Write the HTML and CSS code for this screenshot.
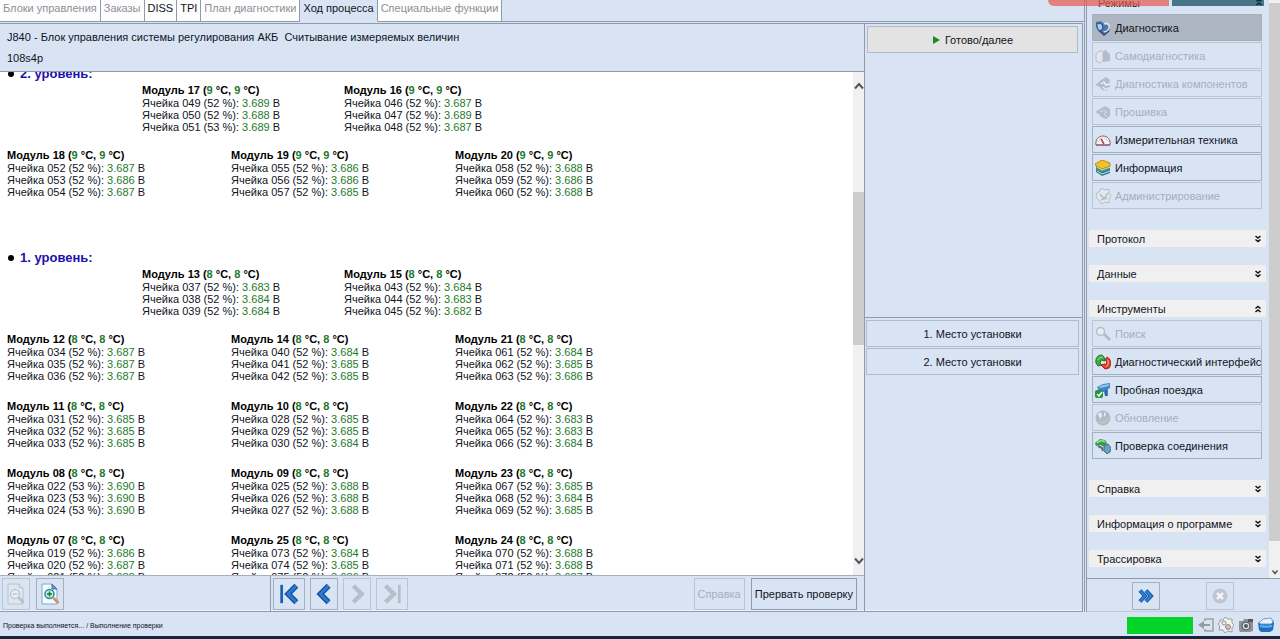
FILE: index.html
```html
<!DOCTYPE html>
<html lang="ru">
<head>
<meta charset="utf-8">
<title>Ход процесса</title>
<link rel="stylesheet" href="styles.css">
</head>
<body>
<div class="app">
  <div class="work">
    <nav class="tabs">
      <button class="tab" disabled>Блоки управления</button>
      <button class="tab" disabled>Заказы</button>
      <button class="tab">DISS</button>
      <button class="tab">TPI</button>
      <button class="tab" disabled>План диагностики</button>
      <button class="tab active">Ход процесса</button>
      <button class="tab" disabled>Специальные функции</button>
    </nav>
    <div class="panes">
      <main class="main">
        <header class="title">
          <p>J840 - Блок управления системы регулирования АКБ&nbsp; Считывание измеряемых величин</p>
          <p>108s4p</p>
        </header>
        <div class="viewport">
          <div class="report">
            <h2 class="level">2. уровень:</h2>
            <div class="pair">
              <section class="module"><h3>Модуль 17 (<b>9</b> °C, <b>9</b> °C)</h3><p>Ячейка 049 (52 %): <b>3.689</b> В</p><p>Ячейка 050 (52 %): <b>3.688</b> В</p><p>Ячейка 051 (53 %): <b>3.689</b> В</p></section>
              <section class="module"><h3>Модуль 16 (<b>9</b> °C, <b>9</b> °C)</h3><p>Ячейка 046 (52 %): <b>3.687</b> В</p><p>Ячейка 047 (52 %): <b>3.689</b> В</p><p>Ячейка 048 (52 %): <b>3.687</b> В</p></section>
            </div>
            <div class="trio">
              <section class="module"><h3>Модуль 18 (<b>9</b> °C, <b>9</b> °C)</h3><p>Ячейка 052 (52 %): <b>3.687</b> В</p><p>Ячейка 053 (52 %): <b>3.686</b> В</p><p>Ячейка 054 (52 %): <b>3.687</b> В</p></section>
              <section class="module"><h3>Модуль 19 (<b>9</b> °C, <b>9</b> °C)</h3><p>Ячейка 055 (52 %): <b>3.686</b> В</p><p>Ячейка 056 (52 %): <b>3.686</b> В</p><p>Ячейка 057 (52 %): <b>3.685</b> В</p></section>
              <section class="module"><h3>Модуль 20 (<b>9</b> °C, <b>9</b> °C)</h3><p>Ячейка 058 (52 %): <b>3.688</b> В</p><p>Ячейка 059 (52 %): <b>3.686</b> В</p><p>Ячейка 060 (52 %): <b>3.688</b> В</p></section>
            </div>
            <h2 class="level next">1. уровень:</h2>
            <div class="pair">
              <section class="module"><h3>Модуль 13 (<b>8</b> °C, <b>8</b> °C)</h3><p>Ячейка 037 (52 %): <b>3.683</b> В</p><p>Ячейка 038 (52 %): <b>3.684</b> В</p><p>Ячейка 039 (52 %): <b>3.684</b> В</p></section>
              <section class="module"><h3>Модуль 15 (<b>8</b> °C, <b>8</b> °C)</h3><p>Ячейка 043 (52 %): <b>3.684</b> В</p><p>Ячейка 044 (52 %): <b>3.683</b> В</p><p>Ячейка 045 (52 %): <b>3.682</b> В</p></section>
            </div>
            <div class="trio">
              <section class="module"><h3>Модуль 12 (<b>8</b> °C, <b>8</b> °C)</h3><p>Ячейка 034 (52 %): <b>3.687</b> В</p><p>Ячейка 035 (52 %): <b>3.687</b> В</p><p>Ячейка 036 (52 %): <b>3.687</b> В</p></section>
              <section class="module"><h3>Модуль 14 (<b>8</b> °C, <b>8</b> °C)</h3><p>Ячейка 040 (52 %): <b>3.684</b> В</p><p>Ячейка 041 (52 %): <b>3.685</b> В</p><p>Ячейка 042 (52 %): <b>3.685</b> В</p></section>
              <section class="module"><h3>Модуль 21 (<b>8</b> °C, <b>8</b> °C)</h3><p>Ячейка 061 (52 %): <b>3.684</b> В</p><p>Ячейка 062 (52 %): <b>3.685</b> В</p><p>Ячейка 063 (52 %): <b>3.686</b> В</p></section>
              <section class="module"><h3>Модуль 11 (<b>8</b> °C, <b>8</b> °C)</h3><p>Ячейка 031 (52 %): <b>3.685</b> В</p><p>Ячейка 032 (52 %): <b>3.685</b> В</p><p>Ячейка 033 (52 %): <b>3.685</b> В</p></section>
              <section class="module"><h3>Модуль 10 (<b>8</b> °C, <b>8</b> °C)</h3><p>Ячейка 028 (52 %): <b>3.685</b> В</p><p>Ячейка 029 (52 %): <b>3.685</b> В</p><p>Ячейка 030 (52 %): <b>3.684</b> В</p></section>
              <section class="module"><h3>Модуль 22 (<b>8</b> °C, <b>8</b> °C)</h3><p>Ячейка 064 (52 %): <b>3.683</b> В</p><p>Ячейка 065 (52 %): <b>3.683</b> В</p><p>Ячейка 066 (52 %): <b>3.684</b> В</p></section>
              <section class="module"><h3>Модуль 08 (<b>8</b> °C, <b>8</b> °C)</h3><p>Ячейка 022 (53 %): <b>3.690</b> В</p><p>Ячейка 023 (53 %): <b>3.690</b> В</p><p>Ячейка 024 (53 %): <b>3.690</b> В</p></section>
              <section class="module"><h3>Модуль 09 (<b>8</b> °C, <b>8</b> °C)</h3><p>Ячейка 025 (52 %): <b>3.688</b> В</p><p>Ячейка 026 (52 %): <b>3.688</b> В</p><p>Ячейка 027 (52 %): <b>3.688</b> В</p></section>
              <section class="module"><h3>Модуль 23 (<b>8</b> °C, <b>8</b> °C)</h3><p>Ячейка 067 (52 %): <b>3.685</b> В</p><p>Ячейка 068 (52 %): <b>3.684</b> В</p><p>Ячейка 069 (52 %): <b>3.685</b> В</p></section>
              <section class="module"><h3>Модуль 07 (<b>8</b> °C, <b>8</b> °C)</h3><p>Ячейка 019 (52 %): <b>3.686</b> В</p><p>Ячейка 020 (52 %): <b>3.687</b> В</p><p>Ячейка 021 (52 %): <b>3.688</b> В</p></section>
              <section class="module"><h3>Модуль 25 (<b>8</b> °C, <b>8</b> °C)</h3><p>Ячейка 073 (52 %): <b>3.684</b> В</p><p>Ячейка 074 (52 %): <b>3.685</b> В</p><p>Ячейка 075 (52 %): <b>3.686</b> В</p></section>
              <section class="module"><h3>Модуль 24 (<b>8</b> °C, <b>8</b> °C)</h3><p>Ячейка 070 (52 %): <b>3.688</b> В</p><p>Ячейка 071 (52 %): <b>3.688</b> В</p><p>Ячейка 072 (52 %): <b>3.687</b> В</p></section>
            </div>
          </div>
          <div class="scrollbar">
            <svg class="arrow" viewBox="0 0 10 8"><path d="M1 6.500 5 2 9 6.500" fill="none" stroke="#555" stroke-width="2"/></svg>
            <div class="track"><div class="thumb"></div></div>
            <svg class="arrow" viewBox="0 0 10 8"><path d="M1 1.500 5 6 9 1.500" fill="none" stroke="#555" stroke-width="2"/></svg>
          </div>
        </div>
        <footer class="toolbar">
          <div class="group zoom-tools">
            <button class="tool" disabled aria-label="Уменьшить">
              <svg viewBox="0 0 20 22"><path d="M2 1h11l4 4v16H2z" fill="#dfe6ef" stroke="#b9c2cd"/><path d="M13 1v4h4" fill="none" stroke="#b9c2cd"/><circle cx="9" cy="11" r="4.500" fill="#e8edf4" stroke="#aeb7c2"/><path d="M6.500 11h5" stroke="#aeb7c2"/><path d="m12.500 14.500 5 5" stroke="#b4bdc8" stroke-width="2.500"/></svg>
            </button>
            <button class="tool" aria-label="Увеличить">
              <svg viewBox="0 0 20 22"><path d="M2 1h10l5 5v15H2z" fill="#f5faff" stroke="#86a3c6"/><path d="M12 1v5h5z" fill="#6d9bd0" stroke="#3c6ca8"/><circle cx="9.500" cy="11" r="4.500" fill="#c5eddb" stroke="#2e8a9a" stroke-width="1.500"/><path d="M7 11h5M9.500 8.500v5" stroke="#147a2c" stroke-width="1.500"/><path d="m13.500 15 5 5" stroke="#c79a68" stroke-width="3"/></svg>
            </button>
          </div>
          <div class="group pager">
            <button class="tool wide" aria-label="В начало"><svg viewBox="0 0 24 24"><path d="M4 2v20" stroke="#1d5fb4" stroke-width="3"/><path d="M20 3 11 12l9 9" fill="none" stroke="#1450a0" stroke-width="6"/><path d="M20 3 11 12l9 9" fill="none" stroke="#2c7bd2" stroke-width="3"/></svg></button>
            <button class="tool" aria-label="Назад"><svg viewBox="0 0 24 24"><path d="M17 3 8 12l9 9" fill="none" stroke="#1450a0" stroke-width="6"/><path d="M17 3 8 12l9 9" fill="none" stroke="#2c7bd2" stroke-width="3"/></svg></button>
            <button class="tool" disabled aria-label="Вперёд"><svg viewBox="0 0 24 24"><path d="m8 3 9 9-9 9" fill="none" stroke="#b6bec9" stroke-width="5"/></svg></button>
            <button class="tool wide" disabled aria-label="В конец"><svg viewBox="0 0 24 24"><path d="m5 3 9 9-9 9" fill="none" stroke="#b6bec9" stroke-width="5"/><path d="M20 2v20" stroke="#b6bec9" stroke-width="3"/></svg></button>
          </div>
          <div class="group actions">
            <button class="action" disabled>Справка</button>
            <button class="action stop">Прервать проверку</button>
          </div>
        </footer>
      </main>
      <aside class="tasks">
        <div class="task-top">
          <button class="task ready"><svg viewBox="0 0 8 8"><path d="M1 0v8l7-4z" fill="#1c8a1c"/></svg>Готово/далее</button>
        </div>
        <div class="task-list">
          <button class="task">1. Место установки</button>
          <button class="task">2. Место установки</button>
        </div>
      </aside>
    </div>
  </div>

  <aside class="side">
    <div class="side-scroll">
      <div class="side-content">
        <div class="modes"><span>Режимы</span><div class="teal"><svg viewBox="0 0 8 8"><path d="m1.500 3.500 2.500-2 2.500 2M1.500 7 4 5l2.500 2" fill="none" stroke="#123" stroke-width="1.500"/></svg></div></div>
        <div class="list">
          <button class="item selected"><svg viewBox="0 0 16 16"><path d="M1 2 6 1l5 4 4 1v4l-6 5-5-3-3-5z" fill="#4c78ac"/><path d="m2 3 5 1 1 5-4 2-2-4z" fill="#a9cbe8" stroke="#274f80"/><path d="M9 4c4-2 6 1 5 4s-4 5-5 3" fill="none" stroke="#d7e5f2" stroke-width="1.500"/><path d="m5 11 4 4 5-4" fill="none" stroke="#234b78" stroke-width="1.500"/></svg>Диагностика</button>
          <button class="item" disabled><svg viewBox="0 0 16 16"><path d="M5 3 1 6v7l4 2 3-3V3z" fill="#e4e8ee" stroke="#b7bfca"/><path d="M8 5c2-4 4-4 4-1l3 2v7l-7 1z" fill="#b4bcc8"/></svg>Самодиагностика</button>
          <button class="item" disabled><svg viewBox="0 0 16 16"><path d="m0 9 5-4 6-4 4 3-1 4 1 3-4 1 1 3-5-1-2-3z" fill="#b4bcc8"/><path d="m6 8 3-2 2 3 3-1M8 11l3 3" stroke="#edf1f6" stroke-width="1.500" fill="none"/></svg>Диагностика компонентов</button>
          <button class="item" disabled><svg viewBox="0 0 16 16"><path d="m0 8 5-3 5-3 5 3v7l-4 3-5-2-2-3z" fill="#b4bcc8"/><path d="m5 8 4-2 3 2-3 2 3 3" stroke="#d9e0e8" fill="none"/></svg>Прошивка</button>
          <button class="item"><svg viewBox="0 0 16 16"><path d="M1 13c-1-6 3-9 7-9s8 3 7 9z" fill="#fbf4f0" stroke="#77606a"/><path d="M3 10c1-3 3-4 5-4s4 1 5 4" fill="none" stroke="#cba7a7" stroke-dasharray="1 1"/><path d="M9 12 6 7" stroke="#a04850" stroke-width="1.500"/><path d="M1 13h14" stroke="#8a5058"/></svg>Измерительная техника</button>
          <button class="item"><svg viewBox="0 0 16 16"><path d="m1 9 9-3 5 3v4l-8 3-6-4z" fill="#327a9c"/><path d="m1 6 8-3 6 3v3l-9 3-5-3z" fill="#4b9b74"/><path d="m0 4 7-4 8 3v3l-8 3-6-3z" fill="#efc327" stroke="#b98d15"/><path d="m2 7 5 3 8-3M2 11l5 3 8-3" fill="none" stroke="#c3dccb"/></svg>Информация</button>
          <button class="item" disabled><svg viewBox="0 0 16 16"><path d="M2 5 5 3l1-3 4 2 4-1v4l2 3-2 3v4l-4-1-4 2-2-4-3-3z" fill="#e4e9f0" stroke="#b4bcc8"/><path d="m5 6 4 5 4-6M6 12l6-2" stroke="#b4bcc8" stroke-width="1.500" fill="none"/></svg>Администрирование</button>
        </div>
        <button class="section">Протокол<svg viewBox="0 0 8 8"><path d="m1.500 1 2.500 2 2.500-2M1.500 4.500 4 6.500l2.500-2" fill="none" stroke="#111" stroke-width="1.500"/></svg></button>
        <button class="section">Данные<svg viewBox="0 0 8 8"><path d="m1.500 1 2.500 2 2.500-2M1.500 4.500 4 6.500l2.500-2" fill="none" stroke="#111" stroke-width="1.500"/></svg></button>
        <button class="section open">Инструменты<svg viewBox="0 0 8 8"><path d="M1.500 3.500 4 1.500l2.500 2M1.500 7 4 5l2.500 2" fill="none" stroke="#111" stroke-width="1.500"/></svg></button>
        <div class="list">
          <button class="item" disabled><svg viewBox="0 0 16 16"><circle cx="5.500" cy="5.500" r="4" fill="#e8edf3" stroke="#b4bcc8" stroke-width="1.500"/><path d="m9 8 6 6" stroke="#b4bcc8" stroke-width="3"/></svg>Поиск</button>
          <button class="item"><svg viewBox="0 0 16 16"><path d="M1 9c-1-5 2-8 6-8l2 2 1 4-4-1-1 3 2 2-4 1z" fill="#3faa3c" stroke="#1c7a24"/><path d="M3 6c1-2 3-3 5-3" stroke="#b3eb9c" fill="none"/><path d="M12 3c4 2 5 7 2 11l-4 1-4-4 4-1 1 1 1-4-2-1z" fill="#e0452c" stroke="#a82317"/><path d="M13 6c1 3 0 5-2 7" stroke="#ffb59b" fill="none"/></svg>Диагностический интерфейс</button>
          <button class="item"><svg viewBox="0 0 16 16"><path d="m2 5 6-3 7-1v5l-2 1v7h-3l-1-4-5-1z" fill="#3f83c4"/><path d="m3 5 5-2 6-1v2L6 6z" fill="#8dc2ea"/><path d="M11 8v6" stroke="#1d4d88"/><rect x="0" y="8" width="8" height="8" rx="2" fill="#219637"/><path d="m2 12 2 2 3-4" fill="none" stroke="#fff" stroke-width="1.500"/></svg>Пробная поездка</button>
          <button class="item" disabled><svg viewBox="0 0 16 16"><circle cx="8" cy="8" r="7.500" fill="#b4bac3"/><path d="m3 4 3-2 1 4-2 3zm6-2 2 2-2 3" fill="#e9edf2"/><path d="M4 12c4 2 7 0 9-3" stroke="#c9cfd7" fill="none"/></svg>Обновление</button>
          <button class="item"><svg viewBox="0 0 16 16"><path d="m0 5 5-4 5 1 2 3-2 4-5-2-4 1z" fill="#36a048"/><path d="M2 5c3-3 5-3 8-1" stroke="#a5e09c" fill="none" stroke-width="1.500"/><path d="m3 8 4 2 1 3" stroke="#506f8c" stroke-width="2" fill="none"/><path d="m9 8 4-2 3 4-1 4-3 2-3-3z" fill="#6c9fc1" stroke="#3f6f94"/></svg>Проверка соединения</button>
        </div>
        <button class="section">Справка<svg viewBox="0 0 8 8"><path d="m1.500 1 2.500 2 2.500-2M1.500 4.500 4 6.500l2.500-2" fill="none" stroke="#111" stroke-width="1.500"/></svg></button>
        <button class="section">Информация о программе<svg viewBox="0 0 8 8"><path d="m1.500 1 2.500 2 2.500-2M1.500 4.500 4 6.500l2.500-2" fill="none" stroke="#111" stroke-width="1.500"/></svg></button>
        <button class="section">Трассировка<svg viewBox="0 0 8 8"><path d="m1.500 1 2.500 2 2.500-2M1.500 4.500 4 6.500l2.500-2" fill="none" stroke="#111" stroke-width="1.500"/></svg></button>
      </div>
      <div class="side-bar"><div class="side-thumb"></div><svg viewBox="0 0 8 6"><path d="m1.500 1.500 2.500 3 2.500-3" fill="none" stroke="#555" stroke-width="1.500"/></svg></div>
    </div>
    <div class="side-foot">
      <button class="mini" aria-label="Далее"><svg viewBox="0 0 16 14"><path d="m2 1.500 5 5.500-5 5.500M8 1.500 13 7l-5 5.500" fill="none" stroke="#1450a0" stroke-width="4"/><path d="m2 1.500 5 5.500-5 5.500M8 1.500 13 7l-5 5.500" fill="none" stroke="#2f83d8" stroke-width="2"/></svg></button>
      <button class="mini" disabled aria-label="Отмена"><svg viewBox="0 0 16 16"><circle cx="8" cy="8" r="7.500" fill="#bfc5cd"/><path d="m5 5 6 6M11 5l-6 6" stroke="#f1f4f8" stroke-width="2.500"/></svg></button>
    </div>
  </aside>

  <footer class="status">
    <span>Проверка выполняется... / Выполнение проверки</span>
    <div class="tray">
      <div class="progress"></div>
      <svg viewBox="0 0 16 16"><path d="M7 4V2h8v12H7v-2" fill="#dde3ea" stroke="#98a0aa" stroke-width="1.500"/><path d="M12 7H6V4L0 8l6 4V9h6z" fill="#949ca6"/></svg>
      <svg viewBox="0 0 16 16"><path d="m2 3 3 0 2-3 3 2 4 0v4l2 2-2 3 0 4-4-1-3 2-2-3-4 0 1-4-2-2 2-2z" fill="#f2f2f0" stroke="#9b9ea2"/><circle cx="6" cy="6" r="2" fill="none" stroke="#8b8f94"/><circle cx="10" cy="10" r="2.500" fill="#dbb" stroke="#858a90"/></svg>
      <svg viewBox="0 0 16 16"><path d="M1 4h4l1-2h5l1 2h3v10l-3 1H2L1 13z" fill="#8d9197"/><path d="M10 2h5v3h-5z" fill="#54585e"/><circle cx="8" cy="9" r="4" fill="#d9dde0" stroke="#4d5157"/><circle cx="8" cy="9" r="2" fill="#555b63"/></svg>
      <svg viewBox="0 0 16 16"><path d="m0 6 4-3h11l1 3-1 7-3 2H3l-2-2z" fill="#1e6fc4"/><path d="m1 6 4-4 8-1 2 4-2 2H3z" fill="#eaf3fb" stroke="#6d9fd0"/><path d="M2 9c5 1 8 1 12 0" stroke="#66b0ee" stroke-width="2" fill="none"/></svg>
    </div>
  </footer>
  <div class="pill"></div>
</div>
</body>
</html>
```

FILE: styles.css
```css
* { box-sizing: border-box; }

body {
  margin: 0;
  background: #d8e4f3;
  color: #10131c;
  font-family: "Liberation Sans", Arial, sans-serif;
  font-size: 11px;
}

h2, h3, p { margin: 0; }

button {
  margin: 0;
  padding: 0;
  border: 1px solid #a5afbd;
  background: #d8e4f3;
  color: inherit;
  font: inherit;
  white-space: nowrap;
}

button:disabled { color: #a3afbe; border-color: #bcc4d0; }

svg { display: block; flex: none; }

.app {
  position: relative;
  display: grid;
  grid-template-columns: minmax(0, 1fr) 195px;
  grid-template-rows: minmax(0, 1fr) 27px;
  height: 100vh;
  overflow: hidden;
}

.work {
  display: flex;
  flex-direction: column;
  min-width: 0;
  min-height: 0;
  border-right: 1px solid #8f9bab;
}

.tabs {
  display: flex;
  height: 22px;
  border-bottom: 1px solid #8f9bab;
}

.tab {
  height: 22px;
  padding: 0 3px 6px;
  border-width: 0 1px 1px 0;
  border-color: #8f9bab;
  background: #fdfdfe;
}

.tab:disabled { color: #8d9096; border-color: #8f9bab; }
.tab.active { background: #d8e4f3; border-bottom-color: #d8e4f3; }

.panes {
  display: grid;
  grid-template-columns: minmax(0, 1fr) 217px;
  flex: 1;
  min-height: 0;
  margin: 1px 1px 0 0;
  border: 1px solid #8f9bab;
  border-width: 1px 1px 1px 0;
  box-shadow: inset 0 -1px #eef3fa;
}

.main {
  display: flex;
  flex-direction: column;
  min-height: 0;
  border-right: 1px solid #8f9bab;
}

.title {
  height: 48px;
  padding: 3px 7px;
  border-bottom: 1px solid #8f9bab;
  line-height: 21px;
}

.viewport {
  display: flex;
  flex: 1;
  min-height: 0;
  overflow: hidden;
  background: #fff;
}

.report { flex: 1; margin-top: -7px; }

.level {
  display: flex;
  align-items: center;
  gap: 6px;
  height: 18px;
  padding-left: 8px;
  color: #1a10ac;
  font-size: 13px;
  line-height: 18px;
}

.level::before {
  content: "";
  width: 6px;
  height: 6px;
  border-radius: 50%;
  background: #000;
}

.level.next { margin-top: 51px; }

.pair {
  display: grid;
  grid-template-columns: 202px 202px;
  padding: 1px 0 16px 142px;
}

.trio {
  display: grid;
  grid-template-columns: 224px 224px 224px;
  row-gap: 18px;
  padding-left: 7px;
}

.module h3 { font-size: 11px; line-height: 13px; color: #000; }
.module p { line-height: 12px; }
.module b { color: #1d7a28; font-weight: inherit; }

.scrollbar {
  display: flex;
  flex-direction: column;
  align-items: center;
  width: 11px;
  padding: 10px 0;
  background: #f0f0f2;
}

.arrow { width: 10px; height: 8px; }
.track { flex: 1; width: 100%; padding: 102px 0 0; }
.thumb { height: 42%; background: #cdcdcd; }

.toolbar {
  display: flex;
  height: 36px;
  border-top: 1px solid #a5afbd;
}

.group { display: flex; align-items: center; }
.zoom-tools { width: 271px; gap: 6px; padding-left: 2px; border-right: 1px solid #8f9bab; }
.pager { gap: 5px; padding-left: 2px; }
.actions { gap: 6px; margin-left: auto; padding-right: 7px; }

.tool {
  display: flex;
  align-items: center;
  justify-content: center;
  width: 28px;
  height: 32px;
}

.tool.wide { width: 32px; }
.tool svg { width: 22px; height: 22px; }

.action { height: 32px; padding: 0 3px; }
.action.stop { border-color: #8f9bab; }

.tasks { display: flex; flex-direction: column; min-height: 0; }

.task-top {
  display: flex;
  height: 294px;
  padding: 2px 4px 0 2px;
  border-bottom: 1px solid #8f9bab;
}

.task {
  display: flex;
  align-items: center;
  justify-content: center;
  gap: 5px;
  width: 100%;
  height: 27px;
  border-color: #b2bbc8;
}

.task svg { width: 8px; height: 8px; }
.ready { background: #e3e3e3; }
.task-list { display: flex; flex-direction: column; gap: 1px; padding: 2px 3px 0 1px; }

.side {
  display: flex;
  flex-direction: column;
  min-width: 0;
  min-height: 0;
  margin-left: 1px;
  border-left: 1px solid #8f9bab;
}

.side-scroll { display: flex; flex: 1; min-height: 0; overflow: hidden; }
.side-content { flex: 1; padding: 0 3px 0 2px; }

.modes {
  display: flex;
  align-items: flex-start;
  justify-content: space-between;
  height: 14px;
  padding-left: 9px;
  line-height: 6px;
}

.teal {
  display: flex;
  justify-content: flex-end;
  width: 92px;
  height: 6px;
  margin-right: 2px;
  background: #477688;
}

.teal svg { width: 8px; height: 8px; margin-right: 1px; margin-top: -2px; }

.list {
  display: flex;
  flex-direction: column;
  gap: 1px;
  margin: 0 4px 21px 3px;
}

.item {
  display: flex;
  align-items: center;
  gap: 4px;
  height: 27px;
  padding-left: 2px;
  text-align: left;
}

.item svg { width: 16px; height: 16px; }
.item.selected { background: #aeb6c3; }

.section {
  display: flex;
  align-items: center;
  justify-content: space-between;
  width: 100%;
  height: 17px;
  margin-bottom: 18px;
  padding: 0 4px 0 8px;
  border: 0;
  background: #f0f0f1;
}

.section.open { margin-bottom: 3px; }
.section svg { width: 8px; height: 8px; }

.side-bar {
  display: flex;
  flex-direction: column;
  align-items: center;
  justify-content: space-between;
  width: 11px;
  padding: 3px 0;
  background: #f0f0f1;
}

.side-thumb { width: 100%; height: 94%; background: #cdcdcd; }
.side-bar svg { width: 8px; height: 6px; }

.side-foot {
  display: flex;
  gap: 46px;
  height: 34px;
  padding: 3px 0 0 45px;
  border-top: 1px solid #8f9bab;
  border-bottom: 1px solid #c3ccd8;
}

.mini {
  display: flex;
  align-items: center;
  justify-content: center;
  width: 28px;
  height: 28px;
}

.mini svg { width: 16px; height: 16px; }

.status {
  display: flex;
  grid-column: 1 / -1;
  align-items: center;
  justify-content: space-between;
  padding: 2px 6px 0 3px;
  border-bottom: 3px solid #17263d;
  font-size: 7px;
}

.tray { display: flex; align-items: center; gap: 4px; }
.tray svg { width: 16px; height: 16px; }
.progress { width: 66px; height: 17px; margin-right: 1px; background: #04d427; }

.pill {
  position: absolute;
  top: 0;
  right: 111px;
  width: 121px;
  height: 6px;
  border-radius: 0 0 0 16px;
  background: rgba(232, 90, 82, .72);
}
```
